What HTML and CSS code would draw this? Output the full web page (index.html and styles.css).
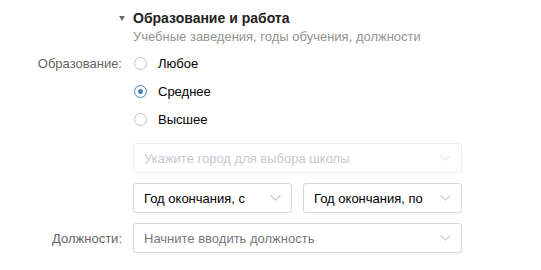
FILE: index.html
```html
<!DOCTYPE html>
<html lang="ru">
<head>
    <meta charset="UTF-8">
    <title>Образование и работа</title>
    <link rel="stylesheet" href="styles.css">
</head>
<body>

    <div class="block">
        <div class="row head">
            <div class="label"><span class="toggle"></span></div>
            <div class="field">
                <div class="title">Образование и работа</div>
                <div class="subtitle">Учебные заведения, годы обучения, должности</div>
            </div>
        </div>

        <div class="row edu">
            <div class="label">Образование:</div>
            <div class="field">
                <div class="radios">
                    <div class="radio"><span class="dot"></span>Любое</div>
                    <div class="radio on"><span class="dot"></span>Среднее</div>
                    <div class="radio"><span class="dot"></span>Высшее</div>
                </div>
                <div class="select disabled">
                    <span>Укажите город для выбора школы</span>
                    <svg class="arrow" width="11" height="6" viewBox="0 0 11 6"><path d="M0.5 0.5 L5.5 5 L10.5 0.5" fill="none" stroke="currentColor" stroke-width="1"/></svg>
                </div>
                <div class="pair">
                    <div class="select filled">
                        <span>Год окончания, с</span>
                        <svg class="arrow" width="11" height="6" viewBox="0 0 11 6"><path d="M0.5 0.5 L5.5 5 L10.5 0.5" fill="none" stroke="currentColor" stroke-width="1"/></svg>
                    </div>
                    <div class="select filled">
                        <span>Год окончания, по</span>
                        <svg class="arrow" width="11" height="6" viewBox="0 0 11 6"><path d="M0.5 0.5 L5.5 5 L10.5 0.5" fill="none" stroke="currentColor" stroke-width="1"/></svg>
                    </div>
                </div>
            </div>
        </div>

        <div class="row posts">
            <div class="label">Должности:</div>
            <div class="field">
                <div class="select">
                    <span>Начните вводить должность</span>
                    <svg class="arrow" width="11" height="6" viewBox="0 0 11 6"><path d="M0.5 0.5 L5.5 5 L10.5 0.5" fill="none" stroke="currentColor" stroke-width="1"/></svg>
                </div>
            </div>
        </div>
    </div>

</body>
</html>
```

FILE: styles.css
```css
body {
    margin: 0;
    padding: 0;
    background: #fff;
    font-family: "Liberation Sans", Arial, sans-serif;
    font-size: 13px;
    color: #000;
}
.block {
    padding-top: 10px;
}
.row {
    display: flex;
}
.label {
    width: 133px;
    padding-right: 11px;
    text-align: right;
    color: #656565;
    box-sizing: border-box;
    flex-shrink: 0;
}
.field {
    width: 329px;
}

/* header */
.head .label {
    display: flex;
    justify-content: flex-end;
    padding-right: 8px;
    padding-top: 6px;
}
.toggle {
    width: 0;
    height: 0;
    border-left: 3.5px solid transparent;
    border-right: 3.5px solid transparent;
    border-top: 5px solid #6b6b6b;
}
.title {
    font-size: 14px;
    font-weight: bold;
    color: #222;
    line-height: 17px;
}
.subtitle {
    color: #939393;
    line-height: 17px;
    margin-top: 1px;
}

/* education */
.row.edu {
    margin-top: 11px;
}
.radios {
    display: flex;
    flex-direction: column;
    margin-top: -7px;
    margin-bottom: 10px;
}
.radio {
    display: flex;
    align-items: center;
    height: 28px;
}
.dot {
    width: 11px;
    height: 11px;
    border: 1px solid #c1c9d1;
    border-radius: 50%;
    margin-left: 1px;
    margin-right: 11px;
    position: relative;
    flex-shrink: 0;
}
.radio.on .dot {
    border-color: #5181b8;
}
.radio.on .dot::after {
    content: "";
    position: absolute;
    left: 3px;
    top: 3px;
    width: 5px;
    height: 5px;
    border-radius: 50%;
    background: #5181b8;
}

/* selects */
.select {
    display: flex;
    align-items: center;
    justify-content: space-between;
    height: 30px;
    box-sizing: border-box;
    border: 1px solid #d3d9de;
    border-radius: 3px;
    padding: 0 10px;
    color: #777;
}
.select .arrow {
    color: #a9b1bb;
    flex-shrink: 0;
}
.select.disabled {
    border-color: #ebeef1;
    color: #c5cad0;
}
.select.disabled .arrow {
    color: #d5dae0;
}
.select.filled {
    color: #000;
}
.pair {
    display: flex;
    gap: 11px;
    margin-top: 10px;
}
.pair .select {
    flex: 1;
}

/* posts */
.row.posts {
    align-items: center;
    margin-top: 10px;
}
```
